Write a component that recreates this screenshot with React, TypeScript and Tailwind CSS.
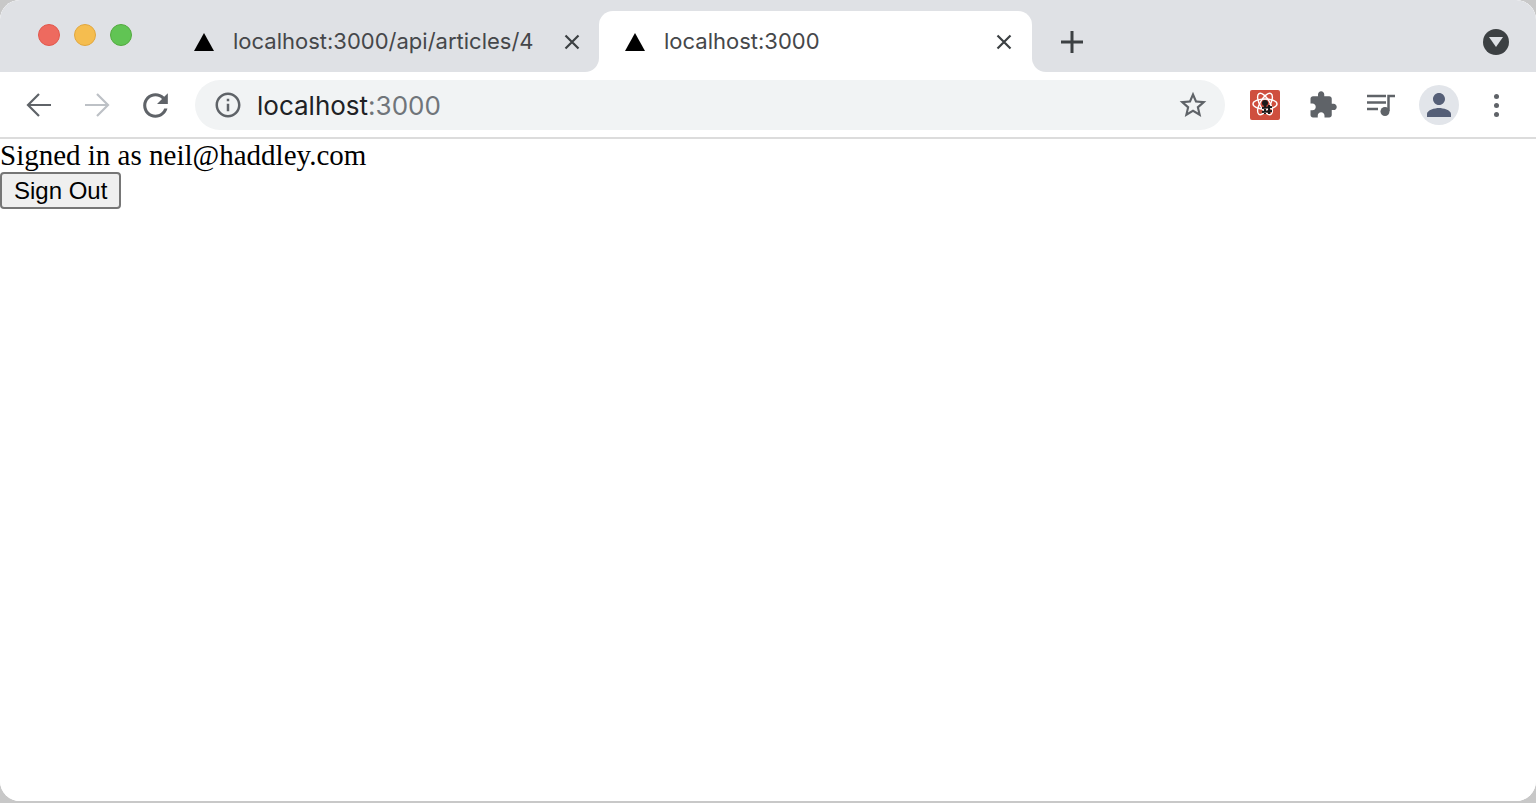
import React from 'react';

const uiFont = "font-['Inter',sans-serif]";

const Favicon = () => (
  <svg width="20" height="18" viewBox="0 0 20 18" className="shrink-0">
    <polygon points="10,0 20,18 0,18" fill="#000" />
  </svg>
);

const CloseIcon = () => (
  <svg width="16" height="16" viewBox="0 0 16 16" className="shrink-0">
    <path d="M1.5 1.5l13 13M14.5 1.5l-13 13" stroke="#3c4043" strokeWidth="2.2" fill="none" />
  </svg>
);

const ToolIcon = ({ d, size = 30, color = '#5f6368' }: { d: string; size?: number; color?: string }) => (
  <svg width={size} height={size} viewBox="0 0 24 24" fill={color}>
    <path d={d} />
  </svg>
);

const Slot = ({ children }: { children: React.ReactNode }) => (
  <div className="flex h-[50px] w-[58px] items-center justify-center">{children}</div>
);

const icons = {
  reload:
    'M17.65 6.35C16.2 4.9 14.21 4 12 4c-4.42 0-7.99 3.58-7.99 8s3.57 8 7.99 8c3.73 0 6.84-2.55 7.73-6h-2.08c-.82 2.33-3.04 4-5.65 4-3.31 0-6-2.69-6-6s2.69-6 6-6c1.66 0 3.14.69 4.22 1.78L13 11h7V4l-2.35 2.35z',
  info: 'M11 7h2v2h-2zm0 4h2v6h-2zm1-9C6.48 2 2 6.48 2 12s4.48 10 10 10 10-4.48 10-10S17.52 2 12 2zm0 18c-4.41 0-8-3.59-8-8s3.59-8 8-8 8 3.59 8 8-3.59 8-8 8z',
  star: 'M22 9.24l-7.19-.62L12 2 9.19 8.63 2 9.24l5.46 4.73L5.82 21 12 17.27 18.18 21l-1.63-7.03L22 9.24zM12 15.4l-3.76 2.27 1-4.28-3.32-2.88 4.38-.38L12 6.1l1.71 4.04 4.38.38-3.32 2.88 1 4.28L12 15.4z',
  puzzle:
    'M20.5 11H19V7c0-1.1-.9-2-2-2h-4V3.5C13 2.12 11.88 1 10.5 1S8 2.12 8 3.5V5H4c-1.1 0-1.99.9-1.99 2v3.8H3.5c1.49 0 2.7 1.21 2.7 2.7s-1.21 2.7-2.7 2.7H2V20c0 1.1.9 2 2 2h3.8v-1.5c0-1.49 1.21-2.7 2.7-2.7 1.49 0 2.7 1.21 2.7 2.7V22H17c1.1 0 2-.9 2-2v-4h1.5c1.38 0 2.5-1.12 2.5-2.5S21.88 11 20.5 11z',
  person:
    'M12 12c2.21 0 4-1.79 4-4s-1.79-4-4-4-4 1.79-4 4 1.79 4 4 4zm0 2c-2.67 0-8 1.34-8 4v2h16v-2c0-2.66-5.33-4-8-4z',
};

const ArrowIcon = ({ flip, color }: { flip?: boolean; color: string }) => (
  <svg width="28" height="28" viewBox="0 0 28 28" fill="none" className={flip ? '-scale-x-100' : ''}>
    <path d="M3 14h23M14 3L3 14l11 11" stroke={color} strokeWidth="2.2" />
  </svg>
);

const ReactDevtoolsIcon = () => (
  <svg width="30" height="30" viewBox="0 0 30 30" className="rounded-[2px] bg-[#cf4f3e]">
    <g fill="none" stroke="#fff" strokeWidth="1.4">
      <ellipse cx="15" cy="14" rx="12" ry="5" />
      <ellipse cx="15" cy="14" rx="12" ry="5" transform="rotate(60 15 14)" />
      <ellipse cx="15" cy="14" rx="12" ry="5" transform="rotate(120 15 14)" />
    </g>
    <circle cx="15" cy="13" r="3" fill="#1b1b1b" />
    <path d="M15 15v9M19 15v9M12 18l10-1M12 22l10-1" stroke="#1b1b1b" strokeWidth="2" fill="none" />
  </svg>
);

const QueueIcon = () => (
  <svg width="30" height="26" viewBox="0 0 30 26" fill="none">
    <path d="M1 4h19M1 10.500h19M1 17h11" stroke="#5f6368" strokeWidth="2.5" />
    <path d="M22.500 19V4H29" stroke="#5f6368" strokeWidth="2.500" />
    <circle cx="19" cy="19.500" r="4.500" fill="#5f6368" />
  </svg>
);

const App = () => {
  return (
    <div className="h-[803px] w-full overflow-hidden bg-[#c8c8c8] pb-[2px]">
      <div className="flex h-full flex-col overflow-hidden rounded-[20px] bg-white">
        {/* tab strip */}
        <div className={`flex h-[72px] shrink-0 bg-white ${uiFont}`}>
          <div className="flex w-[599px] shrink-0 rounded-br-[14px] bg-[#dfe1e5]">
            <div className="flex items-start gap-[14px] pl-[38px] pt-[24px]">
              <div className="h-[22px] w-[22px] rounded-full border border-[#e2574c] bg-[#ee6a5f]" />
              <div className="h-[22px] w-[22px] rounded-full border border-[#e1a73e] bg-[#f5bd4f]" />
              <div className="h-[22px] w-[22px] rounded-full border border-[#53aa3f] bg-[#61c454]" />
            </div>
            <div className="ml-[62px] flex flex-1 items-center pr-[19px] pt-[11px]">
              <Favicon />
              <span className="ml-[19px] flex-1 text-[22px] text-[#45474a]">localhost:3000/api/articles/4</span>
              <CloseIcon />
            </div>
          </div>
          <div className="w-[433px] shrink-0 bg-[#dfe1e5] pt-[11px]">
            <div className="flex h-[61px] items-center rounded-t-[14px] bg-white pl-[26px] pr-[20px]">
              <Favicon />
              <span className="ml-[19px] flex-1 text-[22px] text-[#45474a]">localhost:3000</span>
              <CloseIcon />
            </div>
          </div>
          <div className="flex flex-1 items-center justify-between rounded-bl-[14px] bg-[#dfe1e5] pl-[28px] pr-[27px] pt-[11px]">
            <svg width="24" height="24" viewBox="0 0 24 24">
              <path d="M12 1v22M1 12h22" stroke="#3c4043" strokeWidth="3" fill="none" />
            </svg>
            <div className="flex h-[26px] w-[26px] items-center justify-center rounded-full bg-[#3c4043]">
              <svg width="14" height="10" viewBox="0 0 14 10">
                <polygon points="0,0 14,0 7,10" fill="#dee1e6" />
              </svg>
            </div>
          </div>
        </div>

        {/* toolbar */}
        <div className="flex h-[67px] shrink-0 items-start border-b-[2px] border-[#dcdcdc] bg-white pl-[10px] pt-[8px]">
          <Slot>
            <ArrowIcon color="#5f6368" />
          </Slot>
          <Slot>
            <ArrowIcon flip color="#bdc1c6" />
          </Slot>
          <Slot>
            <ToolIcon d={icons.reload} size={37} />
          </Slot>
          <div className={`ml-[11px] flex h-[50px] w-[1030px] shrink-0 items-center rounded-full bg-[#f1f3f4] pl-[18px] pr-[16px] ${uiFont}`}>
            <ToolIcon d={icons.info} />
            <span className="ml-[14px] flex-1 text-[26px] text-[#202124]">
              localhost<span className="text-[#70757a]">:3000</span>
            </span>
            <ToolIcon d={icons.star} size={32} />
          </div>
          <div className="ml-[11px] flex">
            <Slot>
              <ReactDevtoolsIcon />
            </Slot>
            <Slot>
              <ToolIcon d={icons.puzzle} />
            </Slot>
            <Slot>
              <QueueIcon />
            </Slot>
            <Slot>
              <div className="flex h-[40px] w-[40px] items-center justify-center rounded-full bg-[#e2e5ea]">
                <ToolIcon d={icons.person} size={36} color="#555f77" />
              </div>
            </Slot>
            <Slot>
              <div className="flex -translate-x-[1px] flex-col gap-[4px]">
                <div className="h-[5px] w-[5px] rounded-full bg-[#5f6368]" />
                <div className="h-[5px] w-[5px] rounded-full bg-[#5f6368]" />
                <div className="h-[5px] w-[5px] rounded-full bg-[#5f6368]" />
              </div>
            </Slot>
          </div>
        </div>

        {/* page */}
        <div className="flex-1 bg-white text-black">
          <div className="font-['Liberation_Serif',serif] text-[29px] leading-[33px]">Signed in as neil@haddley.com</div>
          <button className="box-border block h-[37px] rounded-[4px] border-2 border-[#767676] bg-[#efefef] px-[12px] font-['Liberation_Sans',sans-serif] text-[24px] leading-none">
            Sign Out
          </button>
        </div>
      </div>
    </div>
  );
};

export default App;
